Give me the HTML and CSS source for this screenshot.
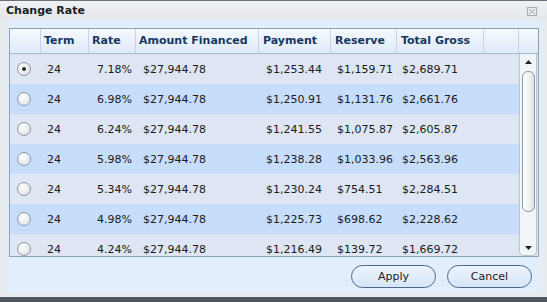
FILE: index.html
```html
<!DOCTYPE html>
<html lang="en">
<head>
    <meta charset="UTF-8">
    <title>Change Rate</title>
    <link rel="stylesheet" href="styles.css">
</head>
<body>
    <div class="dialog">
        <div class="titlebar">
            <span class="title">Change Rate</span>
            <svg class="close" width="10" height="9" viewBox="0 0 10 9">
                <rect x="0.5" y="0.5" width="9" height="8" fill="none" stroke="#a9aeb3"/>
                <path d="M2 2 L8 7 M8 2 L2 7" stroke="#a9aeb3" stroke-width="1"/>
            </svg>
        </div>
        <div class="panel">
            <div class="grid">
                <div class="grid-head">
                    <div class="hc c-radio"></div>
                    <div class="hc c-term">Term</div>
                    <div class="hc c-rate">Rate</div>
                    <div class="hc c-amount">Amount Financed</div>
                    <div class="hc c-pay">Payment</div>
                    <div class="hc c-res">Reserve</div>
                    <div class="hc c-total">Total Gross</div>
                    <div class="hc c-fill"></div>
                    <div class="hc c-scroll"></div>
                </div>
                <div class="grid-body">
                    <div class="rows">
                        <div class="row">
                            <div class="c-radio"><span class="radio checked"></span></div>
                            <div class="c-term">24</div>
                            <div class="c-rate">7.18%</div>
                            <div class="c-amount">$27,944.78</div>
                            <div class="c-pay">$1,253.44</div>
                            <div class="c-res">$1,159.71</div>
                            <div class="c-total">$2,689.71</div>
                        </div>
                        <div class="row alt">
                            <div class="c-radio"><span class="radio"></span></div>
                            <div class="c-term">24</div>
                            <div class="c-rate">6.98%</div>
                            <div class="c-amount">$27,944.78</div>
                            <div class="c-pay">$1,250.91</div>
                            <div class="c-res">$1,131.76</div>
                            <div class="c-total">$2,661.76</div>
                        </div>
                        <div class="row">
                            <div class="c-radio"><span class="radio"></span></div>
                            <div class="c-term">24</div>
                            <div class="c-rate">6.24%</div>
                            <div class="c-amount">$27,944.78</div>
                            <div class="c-pay">$1,241.55</div>
                            <div class="c-res">$1,075.87</div>
                            <div class="c-total">$2,605.87</div>
                        </div>
                        <div class="row alt">
                            <div class="c-radio"><span class="radio"></span></div>
                            <div class="c-term">24</div>
                            <div class="c-rate">5.98%</div>
                            <div class="c-amount">$27,944.78</div>
                            <div class="c-pay">$1,238.28</div>
                            <div class="c-res">$1,033.96</div>
                            <div class="c-total">$2,563.96</div>
                        </div>
                        <div class="row">
                            <div class="c-radio"><span class="radio"></span></div>
                            <div class="c-term">24</div>
                            <div class="c-rate">5.34%</div>
                            <div class="c-amount">$27,944.78</div>
                            <div class="c-pay">$1,230.24</div>
                            <div class="c-res">$754.51</div>
                            <div class="c-total">$2,284.51</div>
                        </div>
                        <div class="row alt">
                            <div class="c-radio"><span class="radio"></span></div>
                            <div class="c-term">24</div>
                            <div class="c-rate">4.98%</div>
                            <div class="c-amount">$27,944.78</div>
                            <div class="c-pay">$1,225.73</div>
                            <div class="c-res">$698.62</div>
                            <div class="c-total">$2,228.62</div>
                        </div>
                        <div class="row">
                            <div class="c-radio"><span class="radio"></span></div>
                            <div class="c-term">24</div>
                            <div class="c-rate">4.24%</div>
                            <div class="c-amount">$27,944.78</div>
                            <div class="c-pay">$1,216.49</div>
                            <div class="c-res">$139.72</div>
                            <div class="c-total">$1,669.72</div>
                        </div>
                    </div>
                    <div class="scrollbar">
                        <svg class="arrow" width="7" height="4" viewBox="0 0 7 4"><path d="M0 4 L3.5 0 L7 4 Z" fill="#222"/></svg>
                        <div class="thumb"></div>
                        <svg class="arrow" width="7" height="4" viewBox="0 0 7 4"><path d="M0 0 L3.5 4 L7 0 Z" fill="#222"/></svg>
                    </div>
                </div>
            </div>
            <div class="actions">
                <button type="button" class="btn">Apply</button>
                <button type="button" class="btn">Cancel</button>
            </div>
        </div>
    </div>
</body>
</html>
```

FILE: styles.css
```css
body {
    margin: 0;
    font-family: "DejaVu Sans", Verdana, sans-serif;
    font-size: 11px;
    color: #1a1a1a;
}
.dialog {
    width: 547px;
    height: 302px;
    box-sizing: border-box;
    background-color: #e9ecef;
    border-top: 1px solid #6b7178;
    border-bottom: 5px solid #50565d;
    display: flex;
    flex-direction: column;
}
.titlebar {
    height: 19px;
    display: flex;
    align-items: center;
    justify-content: space-between;
    padding: 0 10px 0 6px;
    background: linear-gradient(#eff1f3, #e4e7ea);
}
.title {
    font-weight: bold;
    color: #1b1e22;
}
.close {
    display: block;
    margin-top: 1px;
}
.panel {
    margin: 0 6px 5px 7px;
    flex: 1;
    background-color: #e3eefc;
    padding: 8px 2px 0 2px;
}
.grid {
    width: 530px;
    height: 229px;
    box-sizing: border-box;
    border: 1px solid #8fa1b7;
    display: flex;
    flex-direction: column;
    overflow: hidden;
    background-color: #dde6f2;
}
.grid-head {
    display: flex;
    height: 24px;
    flex-shrink: 0;
    border-bottom: 1px solid #a8b9cd;
    background: linear-gradient(#f5f9fe, #dfeaf8);
}
.hc {
    box-sizing: border-box;
    border-right: 1px solid #c6d4e4;
    padding-left: 3px;
    line-height: 24px;
    font-weight: bold;
    color: #16375f;
    white-space: nowrap;
}
.c-radio { width: 31px; flex-shrink: 0; }
.c-term { width: 48px; flex-shrink: 0; }
.c-rate { width: 47px; flex-shrink: 0; }
.c-amount { width: 123px; flex-shrink: 0; }
.c-pay { width: 72px; flex-shrink: 0; }
.c-res { width: 66px; flex-shrink: 0; }
.c-total { width: 87px; flex-shrink: 0; }
.c-fill { width: 35px; flex-shrink: 0; }
.c-scroll { width: 19px; flex-shrink: 0; border-right: none; }
.hc.c-pay, .hc.c-res, .hc.c-total { padding-left: 4px; }
.grid-body {
    display: flex;
    flex: 1;
    min-height: 0;
}
.rows {
    flex: 1;
    overflow: hidden;
}
.row {
    display: flex;
    align-items: center;
    height: 30px;
    background-color: #dde6f2;
}
.row.alt {
    background-color: #c6ddfb;
}
.row > div {
    box-sizing: border-box;
    padding-left: 6px;
    white-space: nowrap;
}
.row .c-rate {
    text-align: right;
    padding-left: 0;
    padding-right: 4px;
}
.row .c-amount, .row .c-pay { padding-left: 7px; }
.row .c-total { padding-left: 5px; }
.row .c-radio {
    padding-left: 7px;
    display: flex;
    align-items: center;
}
.radio {
    width: 12px;
    height: 12px;
    border: 1px solid #8e98a4;
    border-radius: 50%;
    background: radial-gradient(circle at 40% 35%, #ffffff, #e3e6ea 70%, #cfd4da);
    display: flex;
    align-items: center;
    justify-content: center;
}
.radio.checked::after {
    content: "";
    width: 4px;
    height: 4px;
    border-radius: 50%;
    background-color: #2a2d31;
}
.scrollbar {
    width: 18px;
    box-sizing: border-box;
    border: 1px solid #b7c3cf;
    border-top: none;
    border-radius: 0 0 5px 5px;
    background-color: #f2f5f8;
    display: flex;
    flex-direction: column;
    align-items: center;
    padding: 6px 0 5px 0;
    margin-right: 1px;
}
.arrow {
    display: block;
    flex-shrink: 0;
}
.thumb {
    width: 11px;
    flex: 1;
    margin: 7px 0 34px 0;
    border: 1px solid #8f9aa6;
    border-radius: 6px;
    background: linear-gradient(90deg, #ffffff, #eef1f4 60%, #d9dee4);
}
.actions {
    display: flex;
    justify-content: flex-end;
    gap: 11px;
    padding: 8px 7px 0 0;
}
.btn {
    width: 85px;
    height: 23px;
    border: 1px solid #4a6a90;
    border-radius: 12px;
    background: linear-gradient(#edf3fc, #d7e5f7);
    font-family: "DejaVu Sans", Verdana, sans-serif;
    font-size: 11px;
    color: #1a1a1a;
    padding: 0;
    cursor: pointer;
}
```
